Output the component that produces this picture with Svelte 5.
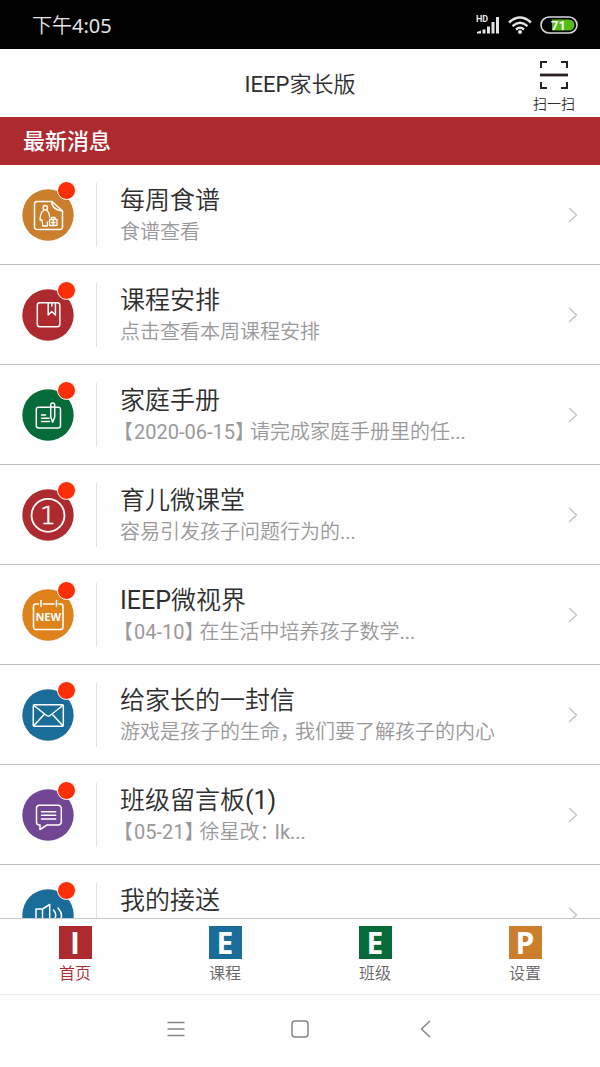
<script>
  const messages = [
    { icon: 'menu', color: '#c97f2b', title: '每周食谱', note: '食谱查看' },
    { icon: 'book', color: '#ad2a2e', title: '课程安排', note: '点击查看本周课程安排' },
    { icon: 'manual', color: '#056b38', title: '家庭手册', note: '【2020-06-15】请完成家庭手册里的任...' },
    { icon: 'one', color: '#ad2a2e', title: '育儿微课堂', note: '容易引发孩子问题行为的...' },
    { icon: 'new', color: '#de821b', title: 'IEEP微视界', note: '【04-10】在生活中培养孩子数学...' },
    { icon: 'mail', color: '#196d98', title: '给家长的一封信', note: '游戏是孩子的生命，我们要了解孩子的内心' },
    { icon: 'chat', color: '#714694', title: '班级留言板(1)', note: '【05-21】徐星改：Ik...' },
    { icon: 'sound', color: '#196d98', title: '我的接送', note: '' }
  ];

  const tabs = [
    { letter: 'I', color: '#ad2a2e', label: '首页', active: true },
    { letter: 'E', color: '#196d98', label: '课程' },
    { letter: 'E', color: '#056b38', label: '班级' },
    { letter: 'P', color: '#c97f2b', label: '设置' }
  ];

  // Latin runs take the regular weight; full-width punctuation is set
  // narrower than the ideographs around it.
  const pieces = (text) =>
    text
      .split(/([【】，：]|[\x21-\x7e]+)/)
      .filter(Boolean)
      .map((value) => ({
        value,
        kind: value === '【' ? 'open' : /^[】，：]$/.test(value) ? 'close' : /^[\x21-\x7e]/.test(value) ? 'latin' : 'han'
      }));
</script>

{#snippet mixed(text)}{#each pieces(text) as p}<span class={p.kind}>{p.value}</span>{/each}{/snippet}

<div class="screen">
  <div class="status">
    <span class="time">下午<span class="latin">4:05</span></span>
    <div class="signals">
      <svg width="26" height="20" viewBox="0 0 26 20" fill="#e4e4e4">
        <text x="0" y="7" class="hd">HD</text>
        <path d="M1 18.500V17L5 15.500V18.500zM6.500 14.500h3v4h-3zM11 11.500h3v7h-3zM15.500 7h3v11.500h-3zM20 2h3v16.500h-3z" />
      </svg>
      <svg width="24" height="20" viewBox="0 0 24 20" fill="none" stroke="#e4e4e4" stroke-width="2.400">
        <path d="M1 7.500Q12-2.500 23 7.500M4.500 11.200Q12 4.500 19.500 11.200M8 14.500Q12 11 16 14.500" />
        <circle cx="12" cy="17" r="2" fill="#e4e4e4" stroke="none" />
      </svg>
      <svg width="38" height="18" viewBox="0 0 38 18">
        <rect x="1" y="1" width="36" height="16" rx="8" fill="#000" stroke="#d8d8d8" stroke-width="1.600" />
        <path d="M12 3.500H29a5.500 5.500 0 0 1 0 11H12z" fill="#52bd14" />
        <text x="18.500" y="13.500" text-anchor="middle" class="charge">71</text>
      </svg>
    </div>
  </div>

  <header>
    <h1>{@render mixed('IEEP家长版')}</h1>
    <button class="scan">
      <svg width="28" height="28" viewBox="0 0 28 28" fill="none" stroke="#2b2020" stroke-width="2">
        <path d="M1 7V1H7M21 1H27V7M27 21V27H21M7 27H1V21" />
        <path d="M0 14H28" stroke-width="2.800" />
      </svg>
      <span>扫一扫</span>
    </button>
  </header>

  <h2>最新消息</h2>

  <main>
    {#each messages as m}
      <a class="row" href="#{m.icon}">
        <span class="badge-wrap">
          <svg class="icon" viewBox="0 0 52 52" fill="none" stroke="#fff" stroke-width="1.500" stroke-linejoin="round" stroke-linecap="round">
            <circle cx="26" cy="26" r="25.700" fill={m.color} stroke="none" />
            {#if m.icon === 'menu'}
              <path d="M30 12.500H15a2.500 2.500 0 0 0-2.500 2.500V38a2.500 2.500 0 0 0 2.500 2.500H38a2.500 2.500 0 0 0 2.500-2.500V22zM30 12.500q-.5 8 10.500 9.500" />
              <circle cx="23.300" cy="18.700" r="2.200" />
              <path d="M21.500 21.700q-3 1.300-3.500 9.300h2l.8 6h4.500V33M25 21.700q2.200 1.500 2.700 6.500" stroke-width="1.300" />
              <path d="M27.500 30.500h7.500v6h-7.500zM29.500 30.500V28.500h3.500v2M31.200 31.800v3.400M29.500 33.500h3.500" stroke-width="1.300" />
            {:else if m.icon === 'book'}
              <rect x="15.300" y="13.700" width="22.500" height="24" rx="2.500" />
              <path d="M26.200 13.700V26l3.600-3.500 3.600 3.500V13.700M29.800 14v3" />
            {:else if m.icon === 'manual'}
              <path d="M28 18.300H16.500a2.200 2.200 0 0 0-2.200 2.200V36.500a2.500 2.500 0 0 0 2.500 2.500H36a2.500 2.500 0 0 0 2.500-2.500V20.500a2.200 2.200 0 0 0-2.200-2.200H33.500" />
              <path d="M28.700 28V16a2 2 0 0 1 4 0V28L30.700 33.300zM28.700 18h4M19.500 26h4M19.500 29.300h7.500M19.500 32.600h8" />
            {:else if m.icon === 'one'}
              <circle cx="26" cy="26.300" r="16.500" stroke-width="1.800" />
              <text x="26" y="35" text-anchor="middle" class="one">1</text>
            {:else if m.icon === 'new'}
              <path d="M16.500 15H14a2.500 2.500 0 0 0-2.500 2.500V38a2.500 2.500 0 0 0 2.500 2.500H38.500A2.500 2.500 0 0 0 41 38V17.500a2.500 2.500 0 0 0-2.500-2.500H37M21.500 15H32M19 11.500v6M34.500 11.500v6" stroke-width="1.600" />
              <text x="26.300" y="31.500" text-anchor="middle" class="new">NEW</text>
            {:else if m.icon === 'mail'}
              <rect x="11.300" y="15.700" width="30" height="21.500" rx="1" />
              <path d="M12 16.500L24.500 26.500q1.800 1.300 3.600 0L40.700 16.500M12 36.500L22.500 25M40.700 36.500L30 25" />
            {:else if m.icon === 'chat'}
              <path d="M17.500 16.300H36.300a3 3 0 0 1 3 3V33a3 3 0 0 1-3 3H25L18 40.500V36h-.5a3 3 0 0 1-3-3V19.300a3 3 0 0 1 3-3z" />
              <path d="M19.500 22.700H33.700M19.500 26.300H33.700M19.500 30H33.700" />
            {:else}
              <path d="M14 20h6.500V33H14zM20.500 20L27.700 15.500V37.500L20.500 33M31.500 21q4.500 5 0 10.500M36 19q7 7.500 0 15" />
            {/if}
          </svg>
          <span class="dot"></span>
        </span>
        <span class="text">
          <span class="title">{@render mixed(m.title)}</span>
          <span class="note">{@render mixed(m.note)}</span>
        </span>
        <svg class="arrow" width="10" height="16" viewBox="0 0 10 16" fill="none" stroke="#c4c4c4" stroke-width="1.400">
          <path d="M1 1L8.500 8L1 15" />
        </svg>
      </a>
    {/each}
  </main>

  <nav class="tabs">
    {#each tabs as t}
      <button class="tab" class:active={t.active}>
        <span class="tile" style:background={t.color}>{t.letter}</span>
        <span>{t.label}</span>
      </button>
    {/each}
  </nav>

  <div class="system">
    <button aria-label="菜单">
      <svg width="18" height="18" viewBox="0 0 18 18"><path d="M0.500 2.500h17M0.500 9h17M0.500 15.500h17" /></svg>
    </button>
    <button aria-label="主屏幕">
      <svg width="18" height="18" viewBox="0 0 18 18"><rect x="1" y="1" width="16" height="16" rx="3" /></svg>
    </button>
    <button aria-label="返回">
      <svg width="18" height="18" viewBox="0 0 18 18"><path d="M15 1L6.500 9l8.500 8" /></svg>
    </button>
  </div>
</div>

<style>
  :global(body) {
    background: #fdfdfd;
  }

  .screen {
    display: flex;
    flex-direction: column;
    height: 100vh;
    overflow: hidden;
    background: #fefefe;
    color: #2e2e2e;
    font-family: Roboto, "Noto Sans CJK SC", sans-serif;
    font-weight: 350;
  }

  button {
    padding: 0;
    border: 0;
    background: none;
    color: inherit;
    font: inherit;
  }

  svg {
    display: block;
    flex: none;
  }

  .latin {
    font-weight: 400;
  }

  .status {
    display: flex;
    align-items: center;
    justify-content: space-between;
    flex: none;
    height: 49px;
    padding: 0 22px 0 32px;
    background: #000;
    color: #e4e4e4;
  }

  .time {
    font-family: "Noto Sans", "Noto Sans CJK SC", sans-serif;
    font-size: 20px;
  }

  .signals {
    display: flex;
    align-items: center;
    gap: 8px;
  }

  .signals svg:first-child {
    margin-right: -2px;
  }

  .hd {
    font: 700 9px Roboto, sans-serif;
  }

  .charge {
    font: 700 13px Roboto, sans-serif;
    fill: #fff;
  }

  header {
    display: grid;
    grid-template-columns: 1fr auto 1fr;
    align-items: center;
    flex: none;
    height: 68px;
    padding: 0 25px;
  }

  h1 {
    grid-column: 2;
    margin: 0;
    padding-top: 4px;
    font-size: 22px;
    font-weight: inherit;
    line-height: 32px;
  }

  .scan {
    display: flex;
    flex-direction: column;
    align-items: center;
    gap: 5px;
    justify-self: end;
    padding-top: 8px;
    font-size: 14px;
    line-height: 20px;
  }

  h2 {
    flex: none;
    margin: 0;
    padding: 2px 23px 0;
    background: #ad2a2e;
    color: #fff;
    font-size: 22px;
    font-weight: 500;
    line-height: 46px;
  }

  main {
    flex: 1;
    min-height: 0;
    overflow: hidden;
  }

  .row {
    display: flex;
    align-items: center;
    box-sizing: border-box;
    height: 100px;
    padding: 0 22px;
    border-bottom: 1px solid #bdbdbd;
    color: inherit;
    text-decoration: none;
  }

  .badge-wrap {
    position: relative;
    flex: none;
    padding: 6px 22px 6px 0;
    border-right: 1px solid #e2e2e2;
  }

  .icon {
    width: 52px;
    height: 52px;
  }

  .dot {
    position: absolute;
    top: -2px;
    left: 35px;
    width: 17px;
    height: 17px;
    border: 1px solid #fff;
    border-radius: 50%;
    background: #fc2f08;
  }

  .one {
    font: 200 25px "DejaVu Sans", sans-serif;
    fill: #fff;
    stroke: #fff;
    stroke-width: 0.600;
  }

  .new {
    font: 700 11px "Open Sans", sans-serif;
    fill: #fff;
    stroke: none;
  }

  .text {
    display: flex;
    flex: 1;
    flex-direction: column;
    min-width: 0;
    padding-left: 23px;
    white-space: nowrap;
  }

  .title {
    font-size: 25px;
    line-height: 36px;
  }

  .note {
    height: 28px;
    color: #999;
    font-size: 20px;
    line-height: 26px;
  }

  .open,
  .close {
    font-family: "Noto Sans CJK SC", sans-serif;
    font-feature-settings: "halt";
    line-height: 1;
  }

  .open {
    padding: 0 1px 0 3px;
  }

  .close {
    padding-right: 5px;
  }

  .tabs {
    display: grid;
    grid-template-columns: repeat(4, 1fr);
    flex: none;
    height: 75px;
    border-top: 1px solid #c8c8c8;
  }

  .tab {
    display: flex;
    flex-direction: column;
    align-items: center;
    gap: 3px;
    padding-top: 7px;
    color: #666;
    font-size: 16px;
    line-height: 24px;
  }

  .active {
    color: #ad2a2e;
  }

  .tile {
    width: 33px;
    height: 33px;
    color: #fff;
    font-family: "Open Sans", sans-serif;
    font-size: 30px;
    font-weight: 700;
    line-height: 33px;
    text-align: center;
  }

  .system {
    display: flex;
    justify-content: center;
    flex: none;
    height: 72px;
    border-top: 1px solid #ececec;
  }

  .system button {
    display: flex;
    align-items: center;
    justify-content: center;
    width: 124px;
    padding-bottom: 4px;
  }

  .system svg {
    fill: none;
    stroke: #858585;
    stroke-width: 1.500;
  }
</style>
